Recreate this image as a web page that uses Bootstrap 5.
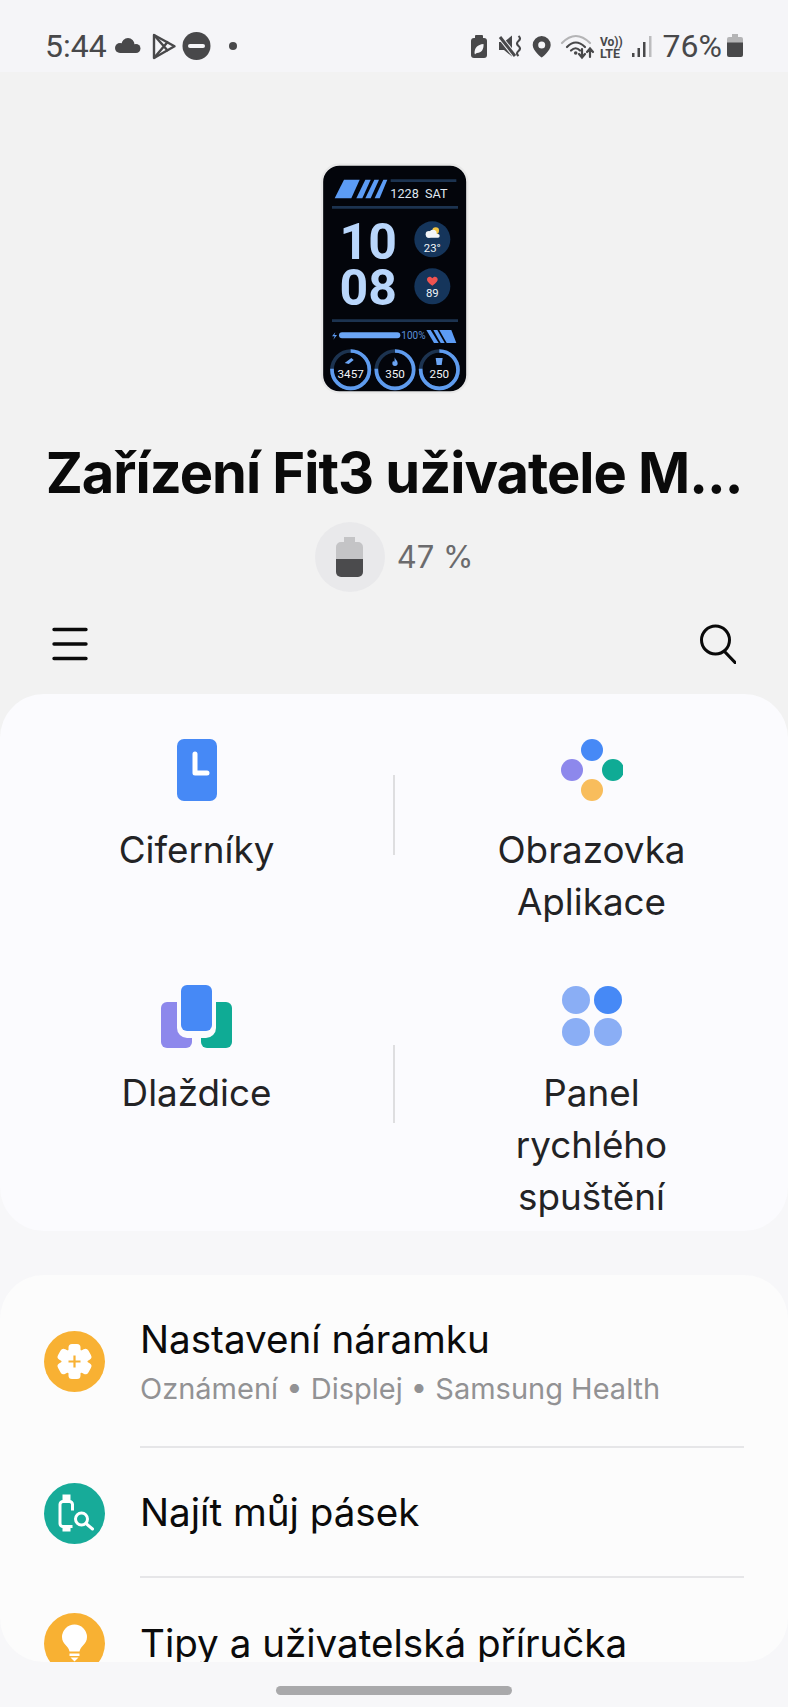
<!DOCTYPE html>
<html lang="cs">
<head>
  <meta charset="UTF-8">
  <meta name="viewport" content="width=device-width, initial-scale=1.0">
  <title>Galaxy Wearable</title>
  <link href="https://cdn.jsdelivr.net/npm/bootstrap@5.3.0/dist/css/bootstrap.min.css" rel="stylesheet">
  <style>
    html, body { height: 100%; }
    body {
      width: 788px;
      height: 1707px;
      overflow: hidden;
      background: #f7f7f9;
      font-family: "Inter", "Roboto", sans-serif;
    }
    .status-strip {
      height: 72px;
      padding: 20px 45px 0 45px;
      background: #f5f5f8;
      color: #48484a;
      font-family: "Roboto", sans-serif;
      font-size: 32px;
      line-height: 1;
    }
    .status-left { margin-left: 7px; }
    .status-right { margin-right: 10px; }
    .status-pct { margin-right: 5px; }
    .watch-head {
      height: 666px;
      padding: 90px 0 0;
      background: #f2f2f2;
    }
    .band-face { display: block; margin: 0 auto; }
    .device-title {
      margin: 44px 0 0;
      font-size: 56px;
      line-height: 68px;
      font-weight: 700;
      letter-spacing: -1px;
      color: #0a0a0a;
      white-space: nowrap;
      text-align: center;
    }
    .battery-row { margin-top: 15px; }
    .battery-disc {
      width: 70px;
      height: 70px;
      border-radius: 50%;
      background: #e9e9eb;
    }
    .battery-pct { margin-left: 12px; font-size: 31px; color: #6b6b6d; }
    .tool-row { margin-top: 32px; padding: 0 52px; }
    .tile-card {
      margin-top: -44px;
      height: 537px;
      background: #fbfbfe;
      border-radius: 44px;
    }
    .tile {
      flex: 1 1 0;
      text-align: center;
      font-size: 36.800px;
      line-height: 52px;
      color: #232325;
    }
    .tile svg { display: block; margin: 0 auto; }
    .tile-top { padding-top: 45px; }
    .tile-top svg { margin-bottom: 23px; }
    .tile-low { padding-top: 57px; }
    .tile-low svg { margin-bottom: 19px; }
    .tile-rule {
      width: 2px;
      min-height: 0;
      align-self: flex-start;
      background: #dedee0;
      opacity: 1;
    }
    .tile-rule-top { height: 80px; margin-top: 81px; }
    .tile-rule-low { height: 78px; margin-top: 117px; }
    .menu-card {
      margin-top: 44px;
      height: 387px;
      overflow: hidden;
      background: #fcfcfc;
      border-radius: 44px;
    }
    .menu-row {
      padding: 0 44px;
      height: 130px;
      background: transparent;
      border: 0;
    }
    .menu-row-tall { height: 173px; }
    .menu-dot { flex: 0 0 61px; width: 61px; height: 61px; }
    .menu-text {
      margin-left: 35px;
      border-bottom: 2px solid #e6e6e8;
    }
    .menu-row:last-child .menu-text { border-bottom: 0; }
    .menu-name { font-size: 38.600px; line-height: 52px; color: #0b0b0b; white-space: nowrap; }
    .menu-sub { margin-top: 4px; font-size: 29px; line-height: 40px; color: #929294; white-space: nowrap; }
    .home-pill {
      width: 236px;
      height: 9px;
      margin: 24px auto 0;
      border-radius: 5px;
      background: #a9a9ab;
    }
  </style>
</head>
<body>
  <div class="status-strip d-flex align-items-center">
    <span>5:44</span>
    <svg class="status-left" width="124" height="32" viewBox="115 30 124 32">
      <g fill="#48484a">
        <circle cx="121" cy="48" r="5"/><circle cx="129" cy="44.500" r="6.500"/><circle cx="137" cy="48.500" r="4.500"/>
        <rect x="121" y="47" width="16" height="6"/>
      </g>
      <g fill="none" stroke="#48484a" stroke-width="2.400" stroke-linejoin="round">
        <path d="M155 35 175.500 46.300 155 58Z"/>
        <path d="M155 35 169 51M155 58 169 41.500"/>
      </g>
      <circle cx="197.500" cy="46" r="14" fill="#48484a"/>
      <rect x="189" y="44" width="17" height="4" rx="2" fill="#f5f5f8"/>
      <circle cx="234" cy="46" r="4" fill="#48484a"/>
    </svg>
    <svg class="status-right ms-auto" width="182" height="32" viewBox="471 30 182 32">
      <g fill="#48484a">
        <rect x="475" y="35" width="8" height="5" rx="1"/>
        <rect x="471" y="38" width="16" height="20" rx="3"/>
        <path fill="#f5f5f8" d="M474.500 53c0-5 3-8.500 9-9 .5 5-2 9-6.500 9-.7 0-1.500 1-2 1.500z"/>
        <path d="M499 42h5l8-6.500v21l-8-6.500h-5z"/>
      </g>
      <path d="M500 37l15 19" stroke="#f5f5f8" stroke-width="5"/>
      <path d="M500 37l15 19" stroke="#48484a" stroke-width="3"/>
      <path d="M518.500 36q3 2.500 0 5t0 5 0 5 0 5" fill="none" stroke="#48484a" stroke-width="2.200"/>
      <path fill="#48484a" fill-rule="evenodd" d="M541.700 36a9 9 0 0 0-9 9c0 6 9 12.500 9 12.500s9-6.500 9-12.500a9 9 0 0 0-9-9zm0 5.500a3.500 3.500 0 1 1 0 7 3.500 3.500 0 0 1 0-7z"/>
      <g fill="none" stroke-width="2.200" stroke-linecap="round">
        <path d="M562 43Q575.700 29 590 43" stroke="#b4b4b6"/>
        <path d="M567 47Q575.700 38 585 47" stroke="#48484a"/>
        <path d="M571 50.500Q575.700 46 580 50.500" stroke="#48484a"/>
        <path d="M582 49v8M579 54l3 3.500 3-3.500M590 57v-8M587 52l3-3.500 3 3.500" stroke="#48484a"/>
      </g>
      <circle cx="575.700" cy="53" r="1.800" fill="#48484a"/>
      <g fill="#48484a" font-family="Roboto, sans-serif" font-weight="700">
        <text x="600" y="45.500" font-size="12">Vo))</text>
        <text x="600" y="58" font-size="12.500">LTE</text>
      </g>
      <g fill="#48484a">
        <rect x="632" y="53" width="2.500" height="4"/>
        <rect x="637.500" y="48" width="2.500" height="9"/>
        <rect x="643" y="42" width="2.500" height="15"/>
        <rect x="649" y="36" width="2.500" height="21" fill="#bcbcbe"/>
      </g>
    </svg>
    <span class="status-pct">76%</span>
    <svg width="16" height="24" viewBox="727 35 16 24">
      <path d="M732 35h6v3h3a2 2 0 0 1 2 2v4h-16v-4a2 2 0 0 1 2-2h3z" fill="#b4b4b6"/>
      <path d="M727 43.500h16v12.500a2 2 0 0 1-2 2h-12a2 2 0 0 1-2-2z" fill="#48484a"/>
    </svg>
  </div>

  <div class="watch-head">
    <svg class="band-face" width="151" height="233" viewBox="53 34 453 699" font-family="Roboto, sans-serif">
      <rect x="62" y="42" width="436" height="683" rx="52" fill="#03050b" stroke="#e8e8e8" stroke-width="7"/>
      <g fill="#5c9cf5">
        <path d="M100 143 128 87H175L150 143Z"/>
        <path d="M165 143 192 87H208L183 143Z"/>
        <path d="M192 143 219 87H233L208 143Z"/>
        <path d="M220 143 246 87H258L235 143Z"/>
      </g>
      <path d="M268 90H465M92 170H470M92 510H470" stroke="#1c3350" stroke-width="8"/>
      <text x="267" y="141" font-size="38" fill="#dfe6ef" xml:space="preserve">1228  SAT</text>
      <g fill="#b9d6fb" font-weight="700" font-size="150" text-anchor="end">
        <text x="287" y="325">10</text>
        <text x="287" y="462">08</text>
      </g>
      <circle cx="393" cy="266" r="54" fill="#15355b"/>
      <circle cx="393" cy="407" r="54" fill="#15355b"/>
      <circle cx="403" cy="240" r="10" fill="#f4c542"/>
      <g fill="#f3f5f8">
        <circle cx="383" cy="251" r="10"/><circle cx="395" cy="248" r="11"/><rect x="375" y="250" width="40" height="11" rx="5"/>
      </g>
      <path d="M393 405c-14-9-16-15-16-19 0-9 12-11 16-3 4-8 16-6 16 3 0 4-2 10-16 19z" fill="#ef5350"/>
      <g fill="#f1f4f8" font-size="34" text-anchor="middle">
        <text x="393" y="303">23°</text>
        <text x="393" y="438">89</text>
      </g>
      <path d="M102 545 92 557H100L96 567 107 553H99Z" fill="#5c9cf5"/>
      <path d="M122 554H288" stroke="#6ba5f5" stroke-width="18" stroke-linecap="round"/>
      <text x="300" y="565" font-size="30" fill="#5c8fd6">100%</text>
      <g fill="#5c9cf5">
        <path d="M375 538H388L412 577H398Z"/>
        <path d="M396 538H408L430 577H418Z"/>
        <path d="M414 538H450L465 577H436Z"/>
      </g>
      <g fill="none" stroke-width="11">
        <circle cx="148" cy="657" r="56" stroke="#1c3350"/>
        <circle cx="281" cy="657" r="56" stroke="#1c3350"/>
        <circle cx="414" cy="657" r="56" stroke="#1c3350"/>
        <g stroke="#5f9cef" stroke-dasharray="265 87">
          <circle cx="148" cy="657" r="56" transform="rotate(-90 148 657)"/>
          <circle cx="281" cy="657" r="56" transform="rotate(-90 281 657)"/>
          <circle cx="414" cy="657" r="56" transform="rotate(-90 414 657)"/>
        </g>
      </g>
      <g fill="#6ba5f5">
        <path d="M130 637 150 622 157 628 142 640Z"/>
        <path d="M280 620c2 8 9 10 9 18a8 8 0 0 1-16 0c0-4 2-6 3-8 1 3 2 3 3 3 1-4 1-9 1-13z"/>
        <path d="M403 622H424L421 643H406Z"/>
      </g>
      <g fill="#f1f4f8" font-size="35" text-anchor="middle">
        <text x="148" y="682">3457</text>
        <text x="281" y="682">350</text>
        <text x="414" y="682">250</text>
      </g>
    </svg>

    <h1 class="device-title">Zařízení Fit3 uživatele M...</h1>

    <div class="battery-row d-flex justify-content-center align-items-center">
      <div class="battery-disc d-flex justify-content-center align-items-center">
        <svg width="27" height="40" viewBox="0 0 27 40">
          <path d="M8 0h11v5h3a5 5 0 0 1 5 5v12H0V10a5 5 0 0 1 5-5h3z" fill="#c4c4c6"/>
          <path d="M0 22h27v13a5 5 0 0 1-5 5H5a5 5 0 0 1-5-5z" fill="#4b4b4d"/>
        </svg>
      </div>
      <span class="battery-pct">47 %</span>
    </div>

    <div class="tool-row d-flex justify-content-between align-items-center">
      <svg width="36" height="40" viewBox="0 0 36 40">
        <path d="M2 5.500H34M2 20H34M2 34.500H34" stroke="#0a0a0a" stroke-width="3.400" stroke-linecap="round"/>
      </svg>
      <svg width="36" height="40" viewBox="0 0 36 40">
        <circle cx="15.500" cy="16" r="14" fill="none" stroke="#0a0a0a" stroke-width="3"/>
        <path d="M25 28 35 38.500" stroke="#0a0a0a" stroke-width="3.200" stroke-linecap="round"/>
      </svg>
    </div>
  </div>

  <div class="tile-card position-relative">
    <div class="d-flex">
      <div class="tile tile-top">
        <svg width="40" height="62" viewBox="0 0 40 62">
          <rect width="40" height="62" rx="7" fill="#4689f6"/>
          <path d="M18 15V34H30" fill="none" stroke="#fff" stroke-width="5" stroke-linecap="round" stroke-linejoin="round"/>
        </svg>
        Ciferníky
      </div>
      <div class="vr tile-rule tile-rule-top"></div>
      <div class="tile tile-top">
        <svg width="62" height="62" viewBox="0 0 62 62">
          <circle cx="31" cy="11" r="11" fill="#4689f6"/>
          <circle cx="11" cy="31" r="11" fill="#8d88ec"/>
          <circle cx="52" cy="31" r="11" fill="#0fab95"/>
          <circle cx="31" cy="51" r="11" fill="#f8bd5c"/>
        </svg>
        Obrazovka<br>Aplikace
      </div>
    </div>
    <div class="d-flex">
      <div class="tile tile-low">
        <svg width="72" height="63" viewBox="0 0 72 63">
          <rect x="0" y="17" width="31" height="46" rx="6" fill="#8d88ec"/>
          <rect x="40" y="17" width="31" height="46" rx="6" fill="#0fab95"/>
          <rect x="16" y="-4" width="39" height="57" rx="10" fill="#fbfbfe"/>
          <rect x="20" y="0" width="31" height="46" rx="6" fill="#4689f6"/>
        </svg>
        Dlaždice
      </div>
      <div class="vr tile-rule tile-rule-low"></div>
      <div class="tile tile-low">
        <svg width="60" height="63" viewBox="0 0 60 63">
          <circle cx="14" cy="15" r="14" fill="#8aaef5"/>
          <circle cx="46" cy="15" r="14" fill="#4689f6"/>
          <circle cx="14" cy="47" r="14" fill="#8aaef5"/>
          <circle cx="46" cy="47" r="14" fill="#8aaef5"/>
        </svg>
        Panel<br>rychlého<br>spuštění
      </div>
    </div>
  </div>

  <div class="menu-card">
    <ul class="list-group list-group-flush">
      <li class="list-group-item menu-row menu-row-tall d-flex align-items-center">
        <svg class="menu-dot" viewBox="-30.500 -30.500 61 61">
          <circle r="30.500" fill="#f8b133"/>
          <g fill="#fff">
            <circle r="13"/>
            <rect x="-6" y="-17.500" width="12" height="35" rx="3.500"/>
            <rect x="-6" y="-17.500" width="12" height="35" rx="3.500" transform="rotate(60)"/>
            <rect x="-6" y="-17.500" width="12" height="35" rx="3.500" transform="rotate(120)"/>
          </g>
          <path d="M0-6V6M-6 0H6" stroke="#f8b133" stroke-width="2.200"/>
        </svg>
        <div class="menu-text flex-fill align-self-stretch d-flex flex-column justify-content-center">
          <div class="menu-name">Nastavení náramku</div>
          <div class="menu-sub">Oznámení • Displej • Samsung Health</div>
        </div>
      </li>
      <li class="list-group-item menu-row d-flex align-items-center">
        <svg class="menu-dot" viewBox="-30.500 -30.500 61 61">
          <circle r="30.500" fill="#17ab99"/>
          <path d="M-2-3V-9a3 3 0 0 0-3-3h-6.500a3 3 0 0 0-3 3V10a3 3 0 0 0 3 3H-2" fill="none" stroke="#fff" stroke-width="3"/>
          <path d="M-12-19H-4V-12H-12ZM-12 13H-4V18H-12Z" fill="#fff"/>
          <circle cx="7" cy="5.500" r="6" fill="none" stroke="#fff" stroke-width="3"/>
          <path d="M11.500 10 18 15.500" stroke="#fff" stroke-width="3" stroke-linecap="round"/>
        </svg>
        <div class="menu-text flex-fill align-self-stretch d-flex flex-column justify-content-center">
          <div class="menu-name">Najít můj pásek</div>
        </div>
      </li>
      <li class="list-group-item menu-row d-flex align-items-center">
        <svg class="menu-dot" viewBox="-30.500 -30.500 61 61">
          <circle r="30.500" fill="#f8b133"/>
          <path d="M-5 8C-6 2-12.500 1-12.500-6.500a12.500 12.500 0 0 1 25 0C12.500 1 6 2 5 8Z" fill="#fff"/>
          <rect x="-5" y="10" width="10" height="2.500" fill="#fff"/>
          <path d="M-4 14H4L0 18Z" fill="#fff"/>
        </svg>
        <div class="menu-text flex-fill align-self-stretch d-flex flex-column justify-content-center">
          <div class="menu-name">Tipy a uživatelská příručka</div>
        </div>
      </li>
    </ul>
  </div>

  <div class="home-pill"></div>

  <script src="https://cdn.jsdelivr.net/npm/bootstrap@5.3.0/dist/js/bootstrap.bundle.min.js"></script>
</body>
</html>
